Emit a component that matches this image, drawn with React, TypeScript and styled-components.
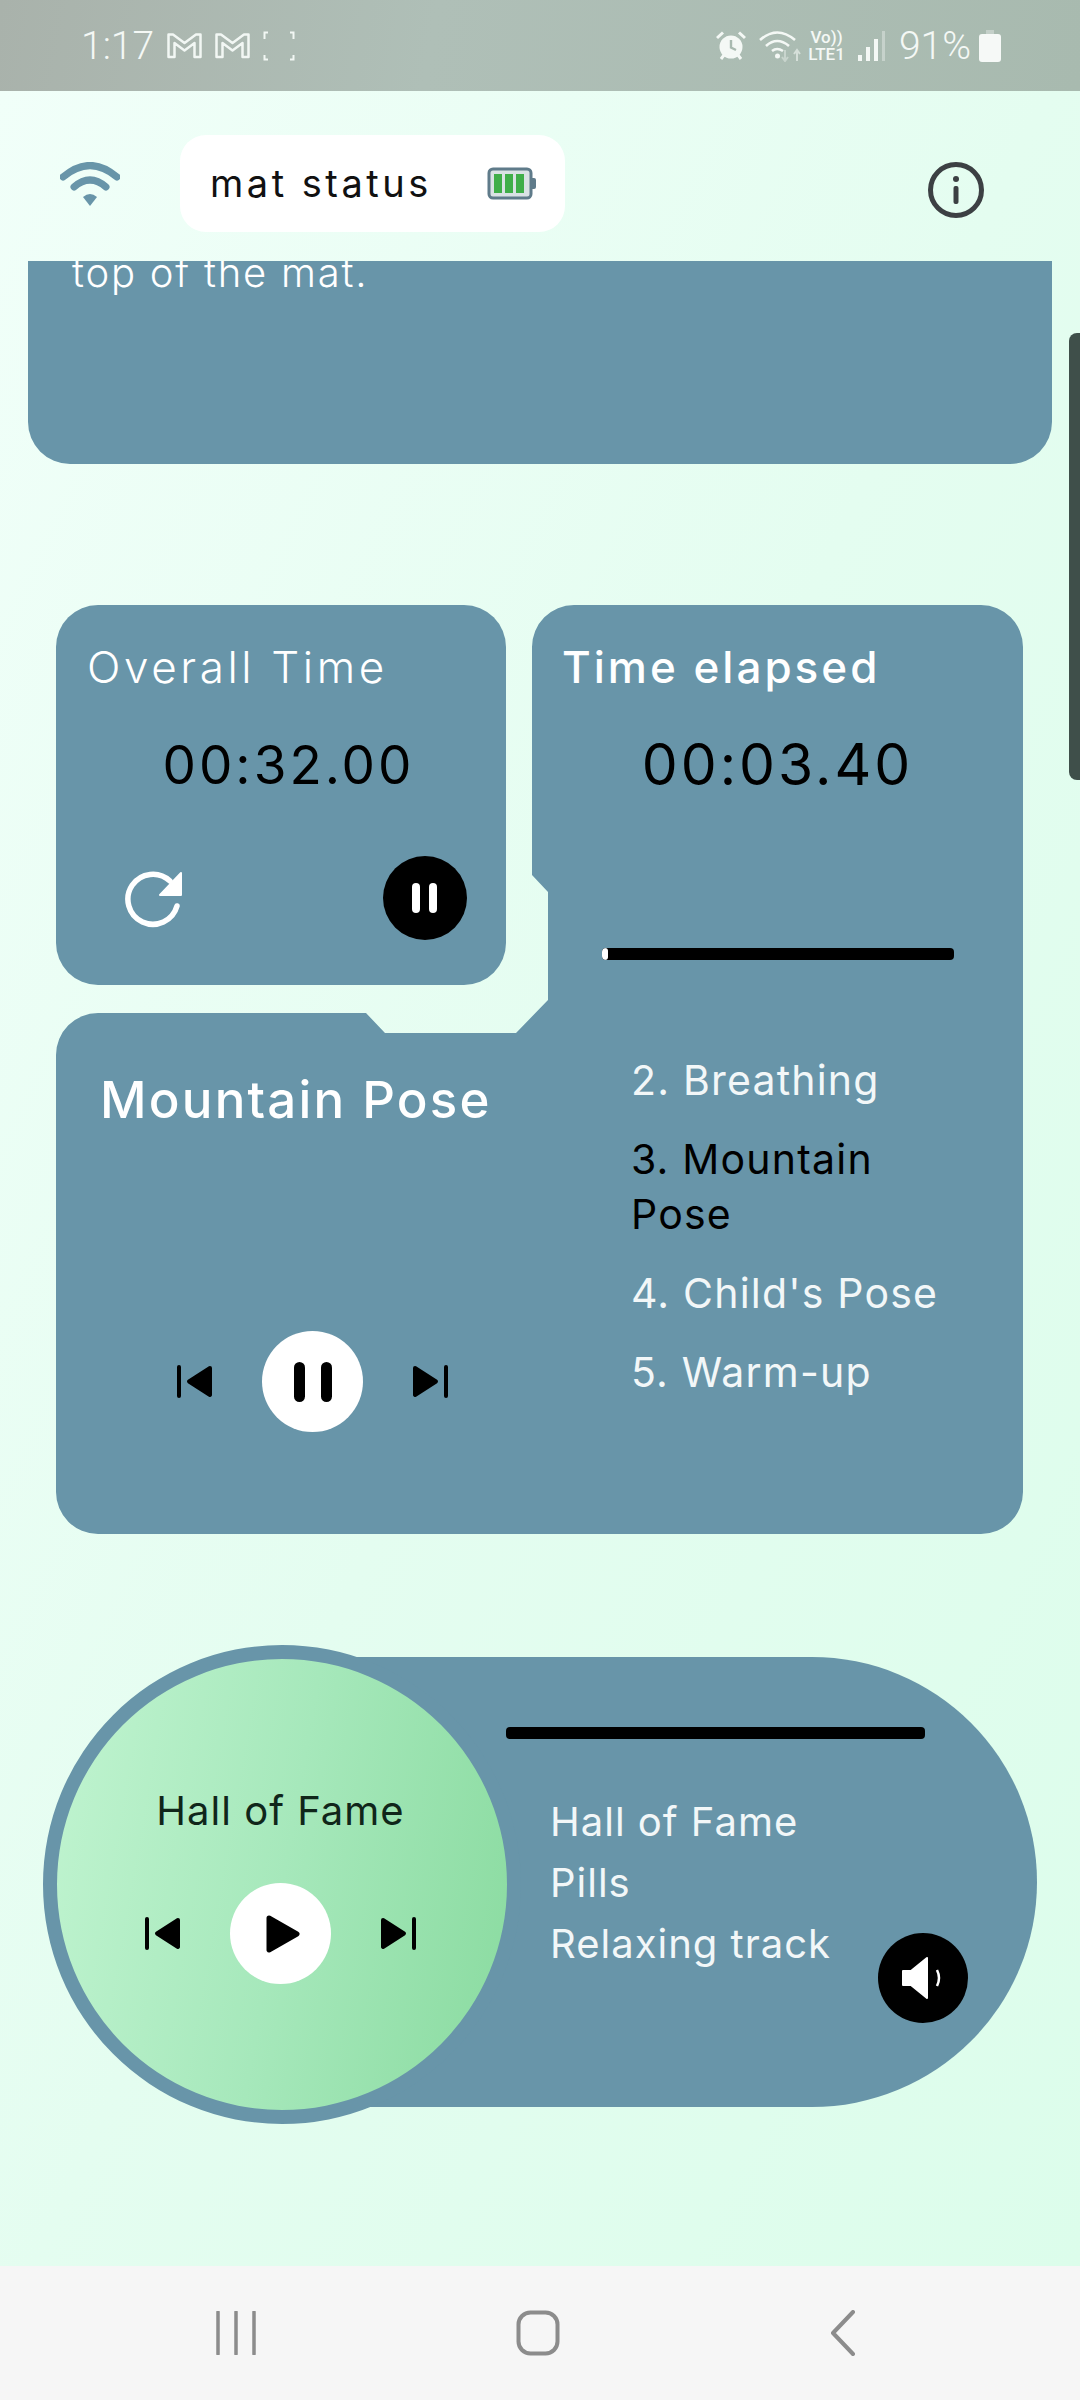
import React from 'react';
import styled, { createGlobalStyle } from 'styled-components';

const PANEL = '#6895a9';

const GlobalStyle = createGlobalStyle`
  html, body {
    margin: 0;
    padding: 0;
    font-family: 'Inter', 'Liberation Sans', sans-serif;
  }
`;

const PANEL_SHAPE =
  'M518 0H925A42 42 0 0 1 967 42V887A42 42 0 0 1 925 929H42A42 42 0 0 1 0 887V450A42 42 0 0 1 42 408H310L329 428H460L492 395V287L476 270V42A42 42 0 0 1 518 0Z';

const queue = [
  { label: '2. Breathing', active: false },
  { label: '3. Mountain Pose', active: true },
  { label: "4. Child's Pose", active: false },
  { label: '5. Warm-up', active: false },
];

const tracks = ['Hall of Fame', 'Pills', 'Relaxing track'];

const PrevIcon: React.FC = () => (
  <svg width="35" height="33" viewBox="0 0 35 33">
    <rect x="0" y="0" width="4" height="33" rx="2" fill="#000" />
    <path d="M33 3L12 16.5L33 30Z" fill="#000" stroke="#000" strokeWidth="4" strokeLinejoin="round" />
  </svg>
);

const NextIcon: React.FC = () => (
  <svg width="35" height="33" viewBox="0 0 35 33">
    <rect x="31" y="0" width="4" height="33" rx="2" fill="#000" />
    <path d="M2 3L23 16.5L2 30Z" fill="#000" stroke="#000" strokeWidth="4" strokeLinejoin="round" />
  </svg>
);

const MailIcon: React.FC = () => (
  <svg width="35" height="27" viewBox="0 0 35 27">
    <path d="M1.5 25V2.5H6L17.5 11L29 2.5H33.5V25H27.5V11L17.5 18.5L7.5 11V25Z" fill="none" stroke="#f2f7f4" strokeWidth="2.5" strokeLinejoin="round" />
  </svg>
);

const App: React.FC = () => {
  return (
    <Screen>
      <GlobalStyle />
      <StatusBar>
        <StatusGroup>
          <StatusText>1:17</StatusText>
          <MailIcon />
          <MailIcon />
          <svg width="32" height="30" viewBox="0 0 32 30">
            <path d="M1.5 8V1.5H5M27 1.5H30.5V8M1.5 24V28.5H5M27 28.5H30.5V24" fill="none" stroke="#f2f7f4" strokeWidth="2" />
          </svg>
        </StatusGroup>
        <StatusGroup>
          <svg width="30" height="30" viewBox="0 0 30 30">
            <circle cx="15" cy="16" r="11.5" fill="#f4f8f5" />
            <path d="M15 9V16.5L20 19" fill="none" stroke="#a9bab0" strokeWidth="2.4" />
            <path d="M1 7L7 1.5M29 7L23 1.5M5 28L8 24M25 28L22 24" stroke="#f4f8f5" strokeWidth="3" />
          </svg>
          <WifiStatus>
            <svg width="44" height="32" viewBox="0 0 44 32">
              <path d="M1 10Q18 -5 36 10M7 16Q18 6 30 16M13 21Q18 17 24 21" fill="none" stroke="#f4f8f5" strokeWidth="2.6" />
              <circle cx="18.500" cy="26" r="2.500" fill="#f4f8f5" />
              <path d="M26 20V31M23 27L26 31L29 27" fill="none" stroke="#c8d4cd" strokeWidth="2" />
              <path d="M38 31V20M35 24L38 20L41 24" fill="none" stroke="#d5dfd9" strokeWidth="2" />
            </svg>
          </WifiStatus>
          <VoLte>
            <span>Vo))</span>
            <span>LTE1</span>
          </VoLte>
          <svg width="28" height="30" viewBox="0 0 28 30">
            <rect x="0" y="24" width="4" height="6" fill="#f4f8f5" />
            <rect x="8" y="16" width="4" height="14" fill="#f4f8f5" />
            <rect x="16" y="8" width="4" height="22" fill="#f4f8f5" />
            <rect x="24" y="0" width="3" height="30" fill="#c6d2cb" />
          </svg>
          <StatusText>91%</StatusText>
          <BatteryIcon width="22" height="32" viewBox="0 0 22 32">
            <path d="M7 0H15V4H7Z" fill="#c4d0c9" />
            <rect x="0" y="4" width="22" height="28" rx="3" fill="#f6f9f7" />
          </BatteryIcon>
        </StatusGroup>
      </StatusBar>

      <Main>
        <ScrollThumb />
        <Header>
          <HeaderLeft>
            <svg width="60" height="44" viewBox="0 0 60 44">
              <path d="M3 15Q30 -8 57 15" fill="none" stroke={PANEL} strokeWidth="7" strokeLinecap="round" />
              <path d="M14 25Q30 11 46 25" fill="none" stroke={PANEL} strokeWidth="7" strokeLinecap="round" />
              <path d="M23 35Q30 29 37 35L30 44Z" fill={PANEL} />
            </svg>
            <MatStatus>
              <MatLabel>mat status</MatLabel>
              <svg width="50" height="33" viewBox="0 0 50 33">
                <rect x="2" y="2" width="42" height="29" rx="4" fill="#d9e2e4" stroke="#5f7b8a" strokeWidth="3" />
                <rect x="7" y="7" width="8" height="19" fill="#3fae49" />
                <rect x="18" y="7" width="8" height="19" fill="#3fae49" />
                <rect x="29" y="7" width="8" height="19" fill="#3fae49" />
                <path d="M45 11H47Q49 11 49 13V20Q49 22 47 22H45Z" fill="#5f7b8a" />
              </svg>
            </MatStatus>
          </HeaderLeft>
          <svg width="56" height="56" viewBox="0 0 56 56">
            <circle cx="28" cy="28" r="25.500" fill="none" stroke="#3c4043" strokeWidth="5" />
            <circle cx="28" cy="17" r="3" fill="#3c4043" />
            <rect x="25.500" y="24" width="5" height="18" rx="2" fill="#3c4043" />
          </svg>
        </Header>

        <InstructionCard>
          <InstructionText>top of the mat.</InstructionText>
        </InstructionCard>

        <Board>
          <ShapedPanel>
            <PoseColumn>
              <PoseTitle>Mountain Pose</PoseTitle>
              <PoseControls>
                <PrevIcon />
                <RoundButton $size={101} $bg="#fff">
                  <svg width="38" height="40" viewBox="0 0 38 40">
                    <rect x="0" y="0" width="11" height="40" rx="5.500" fill="#000" />
                    <rect x="27" y="0" width="11" height="40" rx="5.500" fill="#000" />
                  </svg>
                </RoundButton>
                <NextIcon />
              </PoseControls>
            </PoseColumn>
            <ElapsedColumn>
              <CardTitle $strong>Time elapsed</CardTitle>
              <TimeValue $size={57} $pull={30}>00:03.40</TimeValue>
              <ProgressTrack $width={352} $top={153} $left={40}>
                <ProgressKnob />
              </ProgressTrack>
              <QueueList>
                {queue.map((item) => (
                  <QueueItem key={item.label} $active={item.active}>
                    {item.label}
                  </QueueItem>
                ))}
              </QueueList>
            </ElapsedColumn>
          </ShapedPanel>

          <OverallCard>
            <CardTitle>Overall Time</CardTitle>
            <TimeValue $size={53} $pull={16}>00:32.00</TimeValue>
            <OverallFooter>
              <svg width="60" height="60" viewBox="0 0 60 60">
                <path d="M46 13A25 25 0 1 0 53 38" fill="none" stroke="#fff" strokeWidth="5.500" strokeLinecap="round" />
                <path d="M57 5V27H36Z" fill="#fff" stroke="#fff" strokeWidth="2" strokeLinejoin="round" />
              </svg>
              <RoundButton $size={84} $bg="#000">
                <svg width="26" height="30" viewBox="0 0 26 30">
                  <rect x="0" y="0" width="8" height="30" rx="4" fill="#fff" />
                  <rect x="17" y="0" width="8" height="30" rx="4" fill="#fff" />
                </svg>
              </RoundButton>
            </OverallFooter>
          </OverallCard>
        </Board>

        <Player>
          <Disc>
            <DiscTitle>Hall of Fame</DiscTitle>
            <DiscControls>
              <PrevIcon />
              <RoundButton $size={101} $bg="#fff">
                <PlayGlyph width="34" height="38" viewBox="0 0 34 38">
                  <path d="M3 3L31 19L3 35Z" fill="#000" stroke="#000" strokeWidth="5" strokeLinejoin="round" />
                </PlayGlyph>
              </RoundButton>
              <NextIcon />
            </DiscControls>
          </Disc>
          <PlayerPill>
            <ProgressTrack $width={419} $top={70} $left={0} />
            <PlayerBody>
              <TrackList>
                {tracks.map((name) => (
                  <TrackName key={name}>{name}</TrackName>
                ))}
              </TrackList>
              <VolumeSlot>
                <RoundButton $size={90} $bg="#000">
                  <svg width="46" height="46" viewBox="0 0 46 46">
                    <path d="M3 16H11L27 3V43L11 30H3Z" fill="#fff" stroke="#fff" strokeWidth="2" strokeLinejoin="round" />
                    <path d="M37 15Q41 23 37 31" fill="none" stroke="#fff" strokeWidth="2.500" />
                  </svg>
                </RoundButton>
              </VolumeSlot>
            </PlayerBody>
          </PlayerPill>
        </Player>
      </Main>

      <NavBar>
        <svg width="40" height="44" viewBox="0 0 40 44">
          <path d="M2 1V43M20 1V43M38 1V43" stroke="#8c8c8c" strokeWidth="3.500" strokeLinecap="round" />
        </svg>
        <svg width="44" height="46" viewBox="0 0 44 46">
          <rect x="2.500" y="2.500" width="39" height="41" rx="12" fill="none" stroke="#8c8c8c" strokeWidth="4" />
        </svg>
        <svg width="26" height="46" viewBox="0 0 26 46">
          <path d="M23 2L3 23L23 44" fill="none" stroke="#8c8c8c" strokeWidth="4" strokeLinecap="round" strokeLinejoin="round" />
        </svg>
      </NavBar>
    </Screen>
  );
};

const Screen = styled.div`
  width: 1080px;
  height: 2400px;
  display: flex;
  flex-direction: column;
  overflow: hidden;
`;

const StatusBar = styled.div`
  height: 91px;
  flex: none;
  box-sizing: border-box;
  padding: 0 79px 0 81px;
  display: flex;
  align-items: center;
  justify-content: space-between;
  background: linear-gradient(100deg, #a9b2ab 0%, #afbfb7 40%, #a8baaf 100%);
`;

const StatusGroup = styled.div`
  display: flex;
  align-items: center;
  gap: 13px;
`;

const StatusText = styled.span`
  font-family: 'Roboto', sans-serif;
  font-size: 39px;
  font-weight: 300;
  line-height: 44px;
  color: #f4f8f5;
`;

const BatteryIcon = styled.svg`
  margin-left: -5px;
`;

const WifiStatus = styled.div`
  display: flex;
  margin-right: -8px;
`;

const VoLte = styled.div`
  display: flex;
  flex-direction: column;
  align-items: center;
  font-family: 'Roboto', sans-serif;
  font-size: 17px;
  font-weight: 500;
  line-height: 17px;
  color: #f4f8f5;
`;

const Main = styled.div`
  position: relative;
  flex: 1;
  display: flex;
  flex-direction: column;
  background: linear-gradient(115deg, #f1fff9 0%, #e4fdf0 50%, #dcfdeb 100%);
`;

const ScrollThumb = styled.div`
  position: absolute;
  top: 242px;
  right: 0;
  width: 11px;
  height: 447px;
  border-radius: 8px 0 0 8px;
  background: #3f4f4a;
`;

const Header = styled.div`
  height: 170px;
  flex: none;
  box-sizing: border-box;
  padding: 44px 96px 0 60px;
  display: flex;
  justify-content: space-between;
  align-items: flex-start;

  > svg {
    margin-top: 27px;
  }
`;

const HeaderLeft = styled.div`
  display: flex;
  align-items: flex-start;
  gap: 60px;

  > svg {
    margin-top: 27px;
  }
`;

const MatStatus = styled.div`
  width: 385px;
  height: 97px;
  box-sizing: border-box;
  padding: 0 28px 0 30px;
  display: flex;
  align-items: center;
  justify-content: space-between;
  background: #fff;
  border-radius: 26px;
`;

const MatLabel = styled.span`
  margin-top: -2px;
  font-size: 38px;
  font-weight: 400;
  letter-spacing: 3.5px;
  color: #111;
`;

const InstructionCard = styled.div`
  height: 203px;
  flex: none;
  margin: 0 28px;
  padding: 0 44px;
  background: ${PANEL};
  border-radius: 0 0 42px 42px;
  overflow: hidden;
`;

const InstructionText = styled.div`
  margin-top: -12px;
  font-size: 40px;
  font-weight: 300;
  line-height: 48px;
  letter-spacing: 1.8px;
  color: #fff;
`;

const Board = styled.div`
  margin: 141px 0 0 56px;
  width: 967px;
  height: 929px;
  flex: none;
  display: grid;
`;

const ShapedPanel = styled.div`
  grid-area: 1 / 1;
  display: grid;
  grid-template-columns: 476px 1fr;
  background: ${PANEL};
  clip-path: path('${PANEL_SHAPE}');
`;

const OverallCard = styled.div`
  grid-area: 1 / 1;
  align-self: start;
  width: 450px;
  height: 380px;
  box-sizing: border-box;
  padding: 38px 0 0 31px;
  background: ${PANEL};
  border-radius: 42px;
`;

const CardTitle = styled.div<{ $strong?: boolean }>`
  font-size: 44px;
  font-weight: ${(p) => (p.$strong ? 500 : 300)};
  line-height: 48px;
  letter-spacing: ${(p) => (p.$strong ? 3 : 3.6)}px;
  color: #fff;
  white-space: nowrap;
`;

const TimeValue = styled.div<{ $size: number; $pull: number }>`
  margin: 44px 0 0 -${(p) => p.$pull}px;
  font-size: ${(p) => p.$size}px;
  font-weight: 400;
  line-height: 60px;
  letter-spacing: 3px;
  color: #000;
  text-align: center;
`;

const OverallFooter = styled.div`
  margin: 61px 39px 0 37px;
  display: flex;
  align-items: center;
  justify-content: space-between;
`;

const RoundButton = styled.div<{ $size: number; $bg: string }>`
  width: ${(p) => p.$size}px;
  height: ${(p) => p.$size}px;
  flex: none;
  display: flex;
  align-items: center;
  justify-content: center;
  border-radius: 50%;
  background: ${(p) => p.$bg};
`;

const PlayGlyph = styled.svg`
  margin-left: 4px;
`;

const PoseColumn = styled.div`
  padding: 465px 0 0 44px;
`;

const PoseTitle = styled.div`
  font-size: 51px;
  font-weight: 500;
  line-height: 60px;
  letter-spacing: 2.2px;
  color: #fff;
  white-space: nowrap;
`;

const PoseControls = styled.div`
  margin: 201px 0 0 77px;
  display: flex;
  align-items: center;
  gap: 50px;
`;

const ElapsedColumn = styled.div`
  padding: 38px 0 0 30px;
`;

const ProgressTrack = styled.div<{ $width: number; $top: number; $left: number }>`
  width: ${(p) => p.$width}px;
  height: 12px;
  margin: ${(p) => p.$top}px 0 0 ${(p) => p.$left}px;
  border-radius: 4px;
  background: #000;
  overflow: hidden;
`;

const ProgressKnob = styled.div`
  width: 6px;
  height: 12px;
  border-radius: 3px;
  background: #fff;
`;

const QueueList = styled.div`
  margin: 93px 0 0 69px;
  width: 340px;
  display: flex;
  flex-direction: column;
  gap: 24px;
`;

const QueueItem = styled.div<{ $active: boolean }>`
  font-size: 41px;
  font-weight: 400;
  line-height: 55px;
  letter-spacing: 1.2px;
  color: ${(p) => (p.$active ? '#000' : '#f2f7f8')};
`;

const Player = styled.div`
  margin: 111px 0 0 43px;
  display: flex;
  align-items: flex-start;
`;

const Disc = styled.div`
  position: relative;
  z-index: 1;
  width: 478px;
  height: 479px;
  flex: none;
  box-sizing: border-box;
  padding: 128px 3px 0 0;
  display: flex;
  flex-direction: column;
  align-items: center;
  border: 14px solid ${PANEL};
  border-radius: 50%;
  background: linear-gradient(100deg, #c0f4d0 0%, #a6e8bb 50%, #8adba0 100%);
`;

const DiscTitle = styled.div`
  font-size: 40px;
  line-height: 48px;
  letter-spacing: 1px;
  color: #10261a;
`;

const DiscControls = styled.div`
  margin-top: 48px;
  display: flex;
  align-items: center;
  gap: 50px;
`;

const PlayerPill = styled.div`
  flex: none;
  width: 937px;
  height: 450px;
  margin: 12px 0 0 -421px;
  box-sizing: border-box;
  padding: 0 69px 0 406px;
  background: ${PANEL};
  border-radius: 225px;
`;

const PlayerBody = styled.div`
  display: flex;
  align-items: flex-start;
  justify-content: space-between;
  padding-left: 44px;
`;

const TrackList = styled.div`
  margin-top: 52px;
  display: flex;
  flex-direction: column;
`;

const TrackName = styled.div`
  font-size: 40px;
  line-height: 61px;
  letter-spacing: 1px;
  color: #f2f7f8;
`;

const VolumeSlot = styled.div`
  margin-top: 194px;
`;

const NavBar = styled.div`
  height: 134px;
  flex: none;
  box-sizing: border-box;
  padding-left: 216px;
  display: grid;
  grid-template-columns: 300px 314px auto;
  align-items: center;
  background: #f6f6f6;
`;

export default App;
